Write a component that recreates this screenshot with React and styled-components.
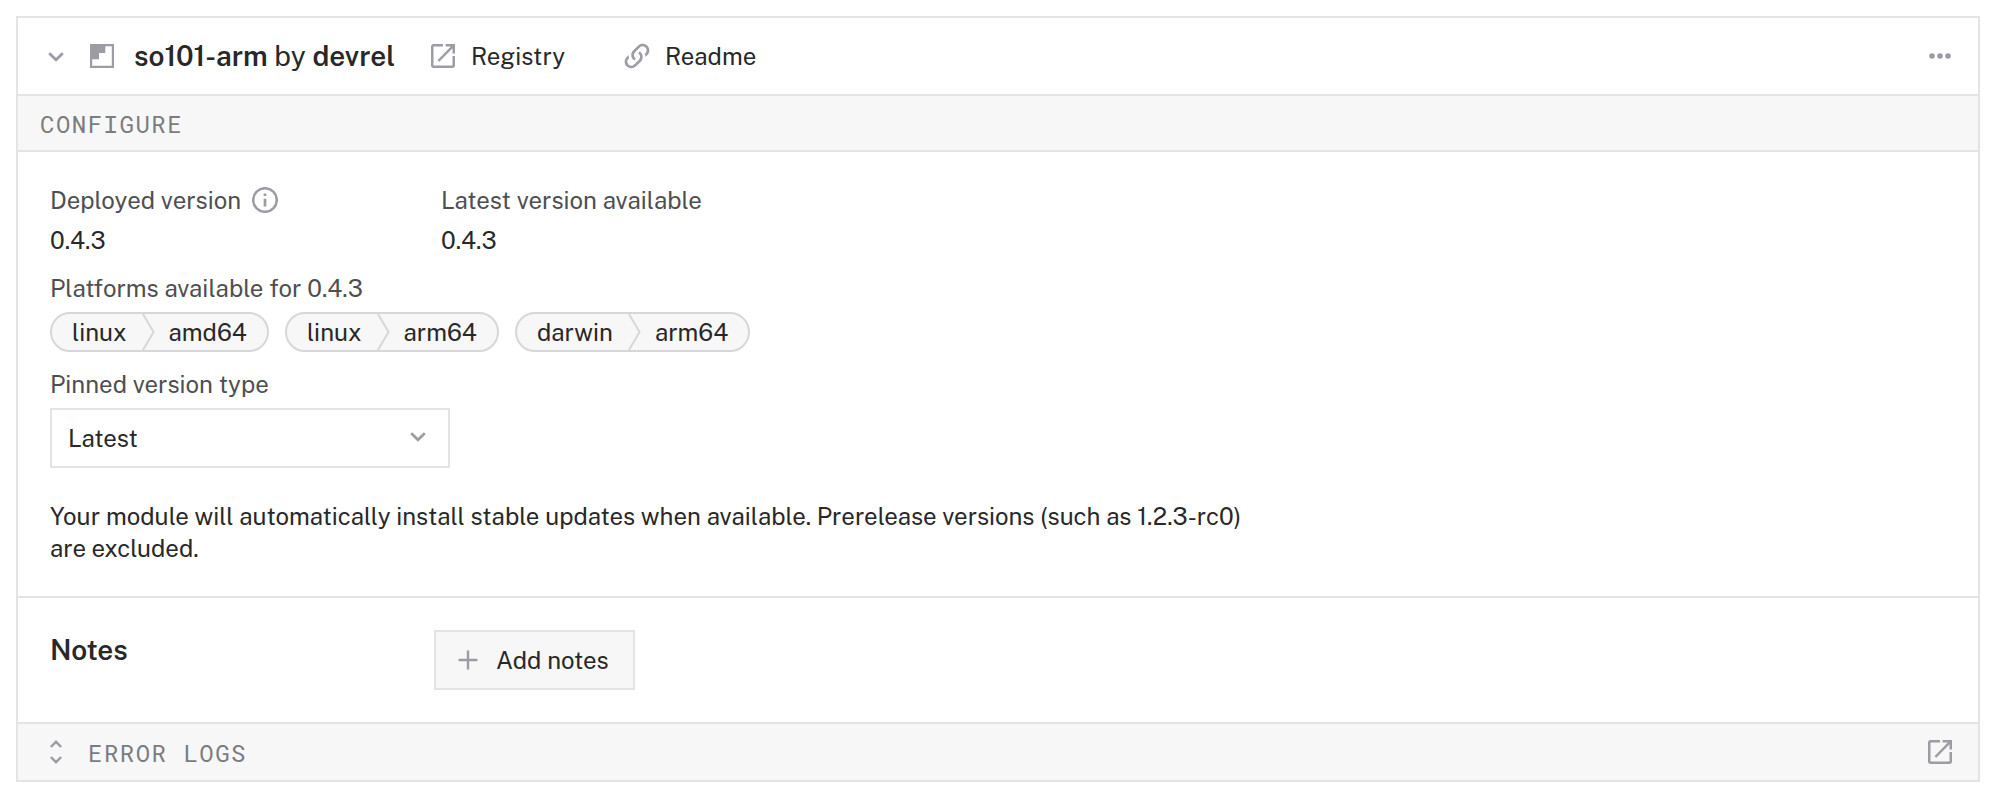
import React from 'react';
import styled, { createGlobalStyle } from 'styled-components';

const color = {
  ink: '#282829',
  label: '#4e4f52',
  muted: '#7a7c80',
  icon: '#9c9ca4',
  line: '#e4e4e6',
  pillLine: '#d7d7d9',
  fill: '#f7f7f8',
};

const GlobalStyle = createGlobalStyle`
  *, *::before, *::after { box-sizing: border-box; }
  body {
    margin: 0;
    background: #fff;
    color: ${color.ink};
    font-family: 'Public Sans', Inter, 'Liberation Sans', sans-serif;
    font-size: 24px;
    line-height: 32px;
  }
  svg { display: block; flex: none; }
`;

const Page = styled.main`
  padding: 16px 22px 18px 16px;
`;

const Card = styled.article`
  border: 2px solid ${color.line};
  background: #fff;
`;

const Header = styled.header`
  display: flex;
  align-items: center;
  height: 76px;
  padding: 0 26px;
`;

const ModuleMark = styled.span`
  margin: 0 20px 0 22px;
`;

const Title = styled.h2`
  width: 297px;
  margin: 0;
  font-size: 28px;
  font-weight: 400;
  letter-spacing: -0.05px;
  white-space: nowrap;
`;

const Strong = styled.strong`
  font-weight: 600;
`;

const HeaderLink = styled.a`
  display: flex;
  align-items: center;
  gap: ${(p) => p.$gap}px;
  width: 190px;
`;

const Spacer = styled.span`
  flex: 1;
`;

const SectionBar = styled.div`
  display: flex;
  align-items: center;
  height: 58px;
  padding: ${(p) => (p.$footer ? '0 26px' : '2px 22px 0')};
  border-top: 2px solid ${color.line};
  border-bottom: ${(p) => (p.$footer ? '0' : `2px solid ${color.line}`)};
  background: ${color.fill};
`;

const BarTitle = styled.h3`
  margin: 0;
  color: ${color.muted};
  font-family: 'Roboto Mono', 'DejaVu Sans Mono', monospace;
  font-size: 24px;
  font-weight: 400;
  letter-spacing: 1.5px;
  text-transform: uppercase;
`;

const LogsTitle = styled(BarTitle)`
  flex: 1;
  margin-left: 20px;
  padding-top: 2px;
`;

const Body = styled.section`
  display: flex;
  flex-direction: column;
  gap: 8px;
  padding: 32px;
`;

const Versions = styled.div`
  display: grid;
  grid-template-columns: 391px auto;
  justify-content: start;
  margin-bottom: 8px;
`;

const Field = styled.div`
  display: flex;
  flex-direction: column;
  gap: 8px;
`;

const Label = styled.div`
  display: flex;
  align-items: center;
  gap: 11px;
  color: ${color.label};
`;

const Value = styled.div`
  color: ${color.ink};
`;

const Pills = styled.div`
  display: flex;
  gap: 16px;
  margin-bottom: 8px;
`;

const Pill = styled.span`
  display: flex;
  align-items: center;
  height: 40px;
  padding: 0 20px;
  border: 2px solid ${color.pillLine};
  border-radius: 20px;
  background: ${color.fill};
`;

const PillSystem = styled.span`
  margin-right: 15px;
`;

const PillArch = styled.span`
  margin-left: 14px;
`;

const Select = styled.div`
  display: flex;
  align-items: center;
  justify-content: space-between;
  width: 400px;
  height: 60px;
  padding: 0 18px 0 16px;
  border: 2px solid ${color.line};
`;

const SelectIcon = styled.span`
  padding-bottom: 4px;
`;

const Help = styled.p`
  width: 1200px;
  margin: 24px 0 0;
`;

const Notes = styled.section`
  display: grid;
  grid-template-columns: 384px auto;
  justify-content: start;
  padding: 32px;
  border-top: 2px solid ${color.line};
`;

const NotesTitle = styled.h3`
  margin: 0;
  font-size: 28px;
  font-weight: 600;
  line-height: 40px;
  letter-spacing: -0.1px;
`;

const AddButton = styled.button`
  display: flex;
  align-items: center;
  gap: 16px;
  width: 201px;
  height: 60px;
  padding: 0 0 0 20px;
  border: 2px solid ${color.line};
  background: ${color.fill};
  color: inherit;
  font: inherit;
`;

function Icon({ size = 24, children, width = 2 }) {
  return (
    <svg width={size} height={size} viewBox={`0 0 ${size} ${size}`} fill="none" stroke={color.icon} strokeWidth={width}>
      {children}
    </svg>
  );
}

const ChevronDown = () => (
  <Icon width={2.7}>
    <path d="M5.2 9.2 12 15.8 18.8 9.2" />
  </Icon>
);

const ModuleIcon = () => (
  <Icon>
    <path
      stroke="none"
      fill={color.icon}
      fillRule="evenodd"
      d="M0 0H24V24H0ZM15.3 2.2V9H9V15.3H2.2V21.8H21.8V2.2Z"
    />
  </Icon>
);

const ExternalIcon = () => (
  <Icon width={2.5}>
    <path d="M12 1.25H2.7Q1.25 1.25 1.25 2.7V21.3Q1.25 22.75 2.7 22.75H21.3Q22.75 22.75 22.75 21.3V12" />
    <path d="M14.6 1.25H22.75V9.4M7.4 17 22.4 1.6" />
  </Icon>
);

const LinkIcon = () => (
  <svg width="32" height="32" viewBox="0 0 24 24" fill={color.icon}>
    <path d="M10.59 13.41C11 13.8 11 14.44 10.59 14.83 10.2 15.22 9.56 15.22 9.17 14.83 7.22 12.88 7.22 9.71 9.17 7.76L12.71 4.22C14.66 2.27 17.83 2.27 19.78 4.22 21.73 6.17 21.73 9.34 19.78 11.29L18.29 12.78C18.3 11.96 18.17 11.14 17.89 10.36L18.36 9.88C19.54 8.71 19.54 6.81 18.36 5.64 17.19 4.46 15.29 4.46 14.12 5.64L10.59 9.17C9.41 10.34 9.41 12.24 10.59 13.41M13.41 9.17C13.8 8.78 14.44 8.78 14.83 9.17 16.78 11.12 16.78 14.29 14.83 16.24L11.29 19.78C9.34 21.73 6.17 21.73 4.22 19.78 2.27 17.83 2.27 14.66 4.22 12.71L5.71 11.22C5.7 12.04 5.83 12.86 6.11 13.65L5.64 14.12C4.46 15.29 4.46 17.19 5.64 18.36 6.81 19.54 8.71 19.54 9.88 18.36L13.41 14.83C14.59 13.66 14.59 11.76 13.41 10.59 13 10.2 13 9.56 13.41 9.17Z" />
  </svg>
);

const DotsIcon = () => (
  <Icon>
    <g fill={color.icon} stroke="none">
      <circle cx="4" cy="12" r="2.8" />
      <circle cx="12" cy="12" r="2.8" />
      <circle cx="20" cy="12" r="2.8" />
    </g>
  </Icon>
);

const InfoIcon = () => (
  <Icon size={26} width={2.5}>
    <circle cx="13" cy="13" r="11.8" />
    <path strokeWidth="2.7" d="M13 6.4V9M13 11.7V19.6" />
  </Icon>
);

const PlusIcon = () => (
  <Icon width={2.4}>
    <path d="M12 2.6V21.4M2.6 12H21.4" />
  </Icon>
);

const ExpandIcon = () => (
  <Icon width={2.4}>
    <path d="M6.8 7 12 1.8 17.2 7M6.8 17 12 22.2 17.2 17" />
  </Icon>
);

const PillDivider = () => (
  <svg width="13" height="36" viewBox="0 0 13 36" fill="none" stroke={color.pillLine} strokeWidth="2">
    <path d="M.9 0 11.6 18 .9 36" />
  </svg>
);

const platforms = [
  { system: 'linux', arch: 'amd64' },
  { system: 'linux', arch: 'arm64' },
  { system: 'darwin', arch: 'arm64' },
];

export default function App() {
  return (
    <Page>
      <GlobalStyle />
      <Card>
        <Header>
          <ChevronDown />
          <ModuleMark><ModuleIcon /></ModuleMark>
          <Title>
            <Strong>so101-arm</Strong> by <Strong>devrel</Strong>
          </Title>
          <HeaderLink $gap={16}><ExternalIcon />Registry</HeaderLink>
          <HeaderLink $gap={12}><LinkIcon />Readme</HeaderLink>
          <Spacer />
          <DotsIcon />
        </Header>

        <SectionBar>
          <BarTitle>Configure</BarTitle>
        </SectionBar>

        <Body>
          <Versions>
            <Field>
              <Label>Deployed version<InfoIcon /></Label>
              <Value>0.4.3</Value>
            </Field>
            <Field>
              <Label>Latest version available</Label>
              <Value>0.4.3</Value>
            </Field>
          </Versions>
          <Label>Platforms available for 0.4.3</Label>
          <Pills>
            {platforms.map((p) => (
              <Pill key={p.system + p.arch}>
                <PillSystem>{p.system}</PillSystem>
                <PillDivider />
                <PillArch>{p.arch}</PillArch>
              </Pill>
            ))}
          </Pills>
          <Label>Pinned version type</Label>
          <Select>
            Latest
            <SelectIcon><ChevronDown /></SelectIcon>
          </Select>
          <Help>
            Your module will automatically install stable updates when available. Prerelease versions (such as 1.2.3-rc0)
            are excluded.
          </Help>
        </Body>

        <Notes>
          <NotesTitle>Notes</NotesTitle>
          <AddButton type="button"><PlusIcon />Add notes</AddButton>
        </Notes>

        <SectionBar $footer>
          <ExpandIcon />
          <LogsTitle>Error logs</LogsTitle>
          <ExternalIcon />
        </SectionBar>
      </Card>
    </Page>
  );
}
